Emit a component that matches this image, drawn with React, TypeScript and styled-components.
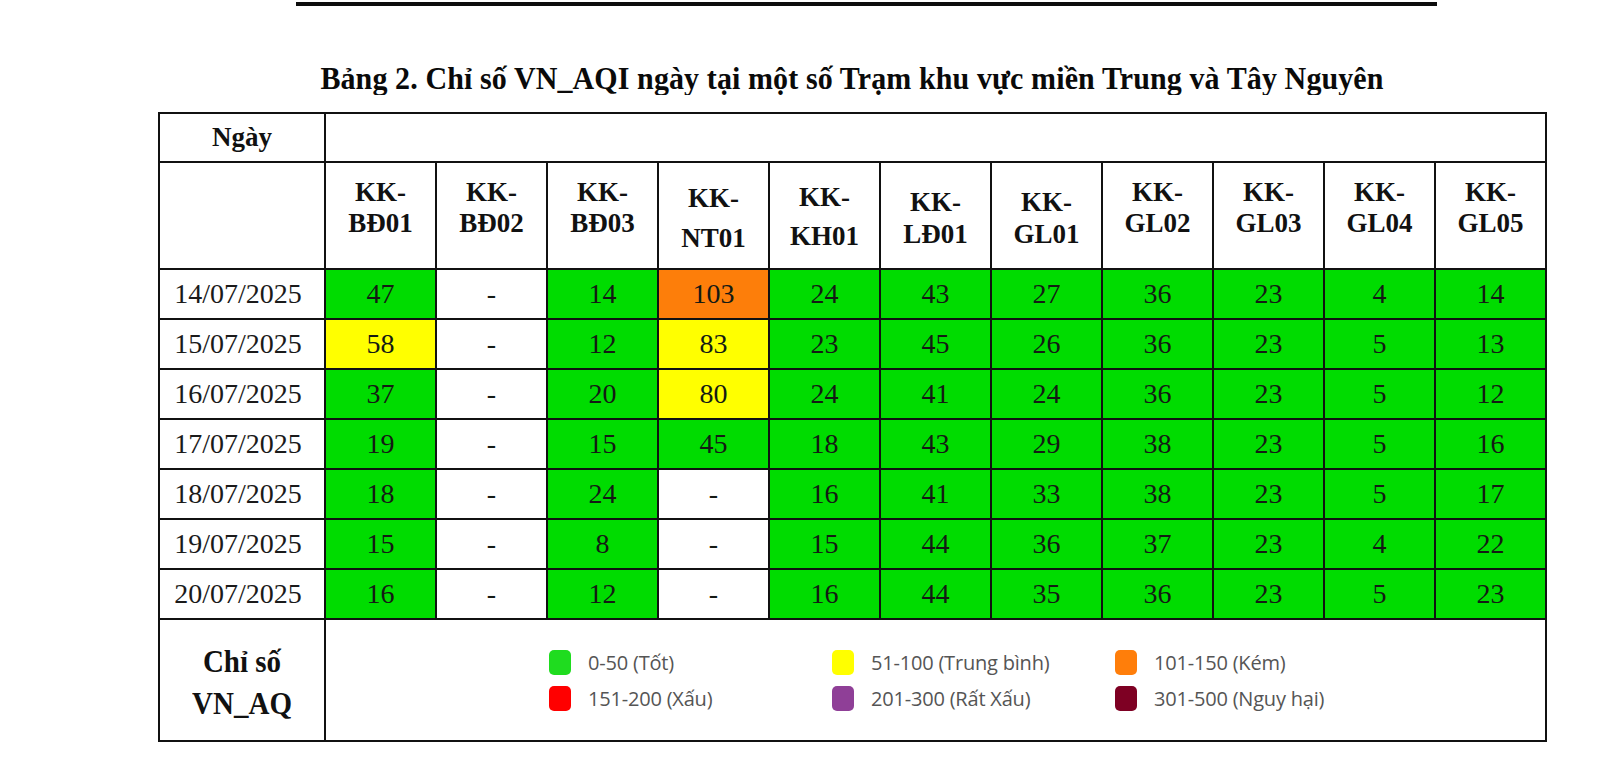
import React from 'react';
import styled, { createGlobalStyle } from 'styled-components';

const GlobalStyle = createGlobalStyle`
  html, body {
    margin: 0;
    padding: 0;
    background: #fff;
  }
  body {
    font-family: "Liberation Serif", "Times New Roman", serif;
    color: #111;
  }
`;

type Station = { code: string; top: number; lh: number };

const stations: Station[] = [
  { code: 'BĐ01', top: 14, lh: 31 },
  { code: 'BĐ02', top: 14, lh: 31 },
  { code: 'BĐ03', top: 14, lh: 31 },
  { code: 'NT01', top: 15, lh: 40 },
  { code: 'KH01', top: 15, lh: 39 },
  { code: 'LĐ01', top: 23, lh: 32 },
  { code: 'GL01', top: 23, lh: 32 },
  { code: 'GL02', top: 14, lh: 31 },
  { code: 'GL03', top: 14, lh: 31 },
  { code: 'GL04', top: 14, lh: 31 },
  { code: 'GL05', top: 14, lh: 31 },
];

const rows: [string, (number | null)[]][] = [
  ['14/07/2025', [47, null, 14, 103, 24, 43, 27, 36, 23, 4, 14]],
  ['15/07/2025', [58, null, 12, 83, 23, 45, 26, 36, 23, 5, 13]],
  ['16/07/2025', [37, null, 20, 80, 24, 41, 24, 36, 23, 5, 12]],
  ['17/07/2025', [19, null, 15, 45, 18, 43, 29, 38, 23, 5, 16]],
  ['18/07/2025', [18, null, 24, null, 16, 41, 33, 38, 23, 5, 17]],
  ['19/07/2025', [15, null, 8, null, 15, 44, 36, 37, 23, 4, 22]],
  ['20/07/2025', [16, null, 12, null, 16, 44, 35, 36, 23, 5, 23]],
];

const legend = [
  { color: '#1fdc1f', label: '0-50 (Tốt)' },
  { color: '#ffff00', label: '51-100 (Trung bình)' },
  { color: '#ff7e0a', label: '101-150 (Kém)' },
  { color: '#ff0000', label: '151-200 (Xấu)' },
  { color: '#8f3f97', label: '201-300 (Rất Xấu)' },
  { color: '#7e0023', label: '301-500 (Nguy hại)' },
];

function levelColor(v: number | null) {
  if (v === null) return '#fff';
  if (v <= 50) return '#00dc00';
  if (v <= 100) return '#ffff00';
  if (v <= 150) return '#fd7e0a';
  return '#ff0000';
}

export default function App() {
  return (
    <Page>
      <GlobalStyle />
      <Rule />
      <Title>Bảng 2. Chỉ số VN_AQI ngày tại một số Trạm khu vực miền Trung và Tây Nguyên</Title>
      <Table>
        <colgroup>
          <col style={{ width: 166 }} />
          {stations.map((s) => (
            <col key={s.code} />
          ))}
        </colgroup>
        <tbody>
          <tr>
            <HeadCell $h={49}>Ngày</HeadCell>
            <Cell colSpan={11} />
          </tr>
          <tr>
            <Cell $h={107} />
            {stations.map((s) => (
              <StationCell key={s.code} $top={s.top} $lh={s.lh}>
                <Line>KK-</Line>
                <Line>{s.code}</Line>
              </StationCell>
            ))}
          </tr>
          {rows.map(([date, values]) => (
            <tr key={date}>
              <DateCell $h={50}>{date}</DateCell>
              {values.map((v, i) => (
                <ValueCell key={i} $bg={levelColor(v)}>
                  {v === null ? '-' : v}
                </ValueCell>
              ))}
            </tr>
          ))}
          <tr>
            <HeadCell $h={122}>
              <IndexLabel>
                Chỉ số
                <br />
                VN_AQ
              </IndexLabel>
            </HeadCell>
            <Cell colSpan={11}>
              <Legend>
                {legend.map((l) => (
                  <LegendItem key={l.label}>
                    <Swatch $color={l.color} />
                    <span>{l.label}</span>
                  </LegendItem>
                ))}
              </Legend>
            </Cell>
          </tr>
        </tbody>
      </Table>
    </Page>
  );
}

const Page = styled.div`
  width: 1600px;
  height: 764px;
  display: flex;
  flex-direction: column;
  overflow: hidden;
`;

const Rule = styled.div`
  margin: 2px 0 0 296px;
  width: 1141px;
  height: 4px;
  background: #0d0d0d;
`;

const Title = styled.h2`
  margin: 52px 0 0 0;
  padding-left: 104px;
  height: 47px;
  text-align: center;
  font-size: 30px;
  font-weight: 700;
  line-height: 40px;
  letter-spacing: 0.1px;
  color: #0a0a0a;
  transform: scaleY(1.08);
`;

const Table = styled.table`
  margin-left: 158px;
  margin-top: 7px;
  width: 1389px;
  table-layout: fixed;
  border-collapse: collapse;
  border: 2px solid #111;
  font-size: 28px;
`;

const Cell = styled.td<{ $h?: number }>`
  border: 2px solid #111;
  padding: 0;
  height: ${(p) => (p.$h ? `${p.$h - 2}px` : 'auto')};
  text-align: center;
  vertical-align: middle;
`;

const HeadCell = styled(Cell)`
  font-weight: 700;
  font-size: 27px;
`;

const DateCell = styled(Cell)`
  color: #1a1a1a;
  padding-right: 8px;
`;

const StationCell = styled.td<{ $top: number; $lh: number }>`
  border: 2px solid #111;
  padding: ${(p) => p.$top}px 0 0 0;
  vertical-align: top;
  text-align: center;
  font-size: 27px;
  font-weight: 700;
  line-height: ${(p) => p.$lh}px;
`;

const Line = styled.span`
  display: block;
`;

const ValueCell = styled.td<{ $bg: string }>`
  border: 2px solid #111;
  padding: 0;
  background: ${(p) => p.$bg};
  text-align: center;
  vertical-align: middle;
  color: #141a14;
`;

const IndexLabel = styled.div`
  font-size: 29px;
  line-height: 38px;
  padding-top: 4px;
  transform: scaleY(1.1);
`;

const Legend = styled.div`
  display: grid;
  grid-template-columns: 283px 283px auto;
  row-gap: 11px;
  padding: 0 0 0 223px;
  font-family: "Open Sans", "Noto Sans", sans-serif;
  font-size: 20px;
  color: #555;
  text-align: left;
`;

const LegendItem = styled.div`
  display: flex;
  align-items: center;
  gap: 17px;
  height: 25px;
  letter-spacing: -0.2px;
`;

const Swatch = styled.span<{ $color: string }>`
  width: 22px;
  height: 25px;
  border-radius: 5px;
  background: ${(p) => p.$color};
  flex: none;
`;
